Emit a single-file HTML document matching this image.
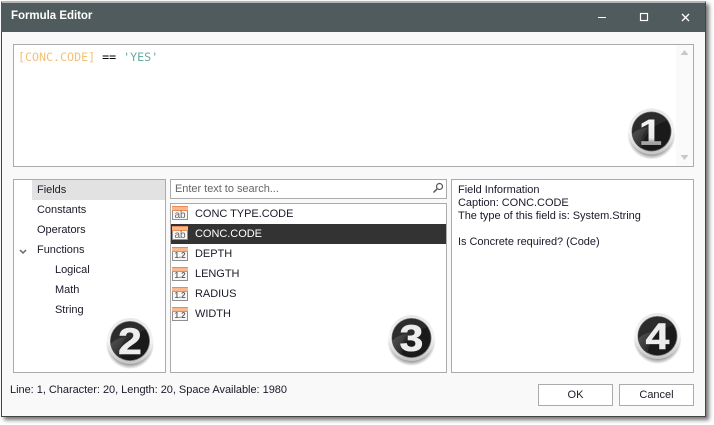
<!DOCTYPE html>
<html><head><meta charset="utf-8"><style>
html,body{margin:0;padding:0;background:#fff}
body{width:714px;height:425px;overflow:hidden;position:relative;font-family:"Liberation Sans",sans-serif;font-size:11px;color:#1a1a2a}
div{position:absolute;box-sizing:border-box}
.win{left:1px;top:1px;width:705px;height:416px;background:#f9f9f9;border:1px solid #444;border-top:2px solid #b5b5b5;box-shadow:3px 3px 4px rgba(0,0,0,.55)}
.title{left:1px;top:3px;width:704px;height:29px;background:#4f5b5c}
.box{background:#fff;border:1px solid #ababab}
.t{white-space:nowrap;line-height:13px;letter-spacing:-.03px}
.sel{background:#e2e2e2}
.ico{width:16px;height:14px;left:172px;background:#f7f7f7;border:1px solid #8f8f8f;border-top:none}
.ico:before{content:"";position:absolute;left:-1px;right:-1px;top:0;height:5px;background:#f9b98f;border-top:1px solid #ee8a55;border-bottom:1px solid #ee8a55;box-sizing:border-box}
.ico span{position:absolute;left:0;right:0;top:5px;text-align:center;font-size:8px;line-height:8px;color:#666;font-weight:bold}
.ico.ab span{font-size:10px;line-height:9px;top:5px;font-weight:normal}
.btn{background:#fff;border:1px solid #ababab;text-align:center;line-height:20px;top:384px;height:22px;width:75px}
</style></head><body>
<div class="win"></div>
<div class="title"></div>
<div class="t" style="left:11px;top:10px;color:#fff;font-weight:bold;font-size:11.5px">Formula Editor</div>
<svg style="position:absolute;left:590px;top:8px" width="110" height="20" fill="none" stroke="#fff">
<path d="M8 9.500h8" stroke-width="1"/><rect x="50.500" y="5.500" width="7" height="7" stroke-width="1.200"/><path d="M92 6l7 7M99 6l-7 7" stroke-width="1.300"/></svg>

<div class="box" style="left:13px;top:44px;width:681px;height:123px"></div>
<div style="left:676px;top:45px;width:17px;height:121px;background:#fafafa"></div>
<svg style="position:absolute;left:676px;top:45px" width="17" height="121" fill="#c8c8c8"><path d="M4.500 10l4-5 4 5z"/><path d="M4.500 110l4 5 4-5z"/></svg>
<div class="t" style="left:18px;top:51px;font-family:'DejaVu Sans Mono','Liberation Mono',monospace;font-size:11.65px;letter-spacing:0;color:#f3c078">[CONC.CODE] <span style="color:#000">==</span> <span style="color:#6aa9a0">'YES'</span></div>

<div class="box" style="left:13px;top:179px;width:153px;height:194px"></div>
<div class="sel" style="left:32px;top:180px;width:133px;height:20px"></div>
<div class="t" style="left:37px;top:184px">Fields</div>
<div class="t" style="left:37px;top:204px">Constants</div>
<div class="t" style="left:37px;top:224px">Operators</div>
<svg style="position:absolute;left:18px;top:248px" width="10" height="8" fill="none" stroke="#666"><path d="M2 2l3 3 3-3" stroke-width="1.500"/></svg>
<div class="t" style="left:37px;top:244px">Functions</div>
<div class="t" style="left:55px;top:264px">Logical</div>
<div class="t" style="left:55px;top:284px">Math</div>
<div class="t" style="left:55px;top:304px">String</div>

<div class="box" style="left:170px;top:179px;width:277px;height:20px"></div>
<div class="t" style="left:175px;top:183px;color:#666">Enter text to search...</div>
<svg style="position:absolute;left:431px;top:181px" width="14" height="14" fill="none" stroke="#555"><circle cx="8.500" cy="5.500" r="3" stroke-width="1.200"/><path d="M6 8l-3.500 3.500" stroke-width="1.500"/></svg>

<div class="box" style="left:170px;top:203px;width:277px;height:170px"></div>
<div style="left:171px;top:224px;width:275px;height:20px;background:#333"></div>
<div class="ico ab" style="top:206px"><span>ab</span></div>
<div class="ico ab" style="top:226px"><span>ab</span></div>
<div class="ico" style="top:247px"><span>1.2</span></div>
<div class="ico" style="top:267px"><span>1.2</span></div>
<div class="ico" style="top:287px"><span>1.2</span></div>
<div class="ico" style="top:307px"><span>1.2</span></div>
<div class="t" style="left:195px;top:208px">CONC TYPE.CODE</div>
<div class="t" style="left:195px;top:228px;color:#fff">CONC.CODE</div>
<div class="t" style="left:195px;top:248px">DEPTH</div>
<div class="t" style="left:195px;top:268px">LENGTH</div>
<div class="t" style="left:195px;top:288px">RADIUS</div>
<div class="t" style="left:195px;top:308px">WIDTH</div>

<div class="box" style="left:451px;top:179px;width:243px;height:194px"></div>
<div class="t" style="left:458px;top:184px">Field Information</div>
<div class="t" style="left:458px;top:197px">Caption: CONC.CODE</div>
<div class="t" style="left:458px;top:210px">The type of this field is: System.String</div>
<div class="t" style="left:458px;top:236px">Is Concrete required? (Code)</div>

<div class="t" style="left:10px;top:384px">Line: 1, Character: 20, Length: 20, Space Available: 1980</div>
<div class="btn" style="left:538px">OK</div>
<div class="btn" style="left:619px">Cancel</div>

<svg style="position:absolute;left:0;top:0" width="714" height="425">
<defs>
<linearGradient id="e" x1="0" y1="0" x2="0" y2="1"><stop offset="0" stop-color="#e8e8e8"/><stop offset=".5" stop-color="#f4f4f4"/><stop offset="1" stop-color="#c4c4c4"/></linearGradient>
<linearGradient id="d" x1="0" y1="0" x2="0" y2="1"><stop offset="0" stop-color="#f8f8f8"/><stop offset=".62" stop-color="#eaeaea"/><stop offset=".72" stop-color="#aaa"/><stop offset="1" stop-color="#777"/></linearGradient>
<linearGradient id="g" x1="0" y1="0" x2="1" y2="1"><stop offset="0" stop-color="#555"/><stop offset="1" stop-color="#222"/></linearGradient>
<radialGradient id="s"><stop offset=".72" stop-color="#000" stop-opacity=".55"/><stop offset="1" stop-color="#000" stop-opacity="0"/></radialGradient>
<g id="b"><ellipse cx="0" cy="4" rx="24" ry="24" fill="url(#s)"/><circle r="23" fill="url(#e)"/><circle r="20" fill="#777"/><circle r="19.200" fill="#1a1a1a"/><path d="M-17 -9A19.500 19.500 0 0 0 -10 17C-8 6 -2 -6 16 -11A19.500 19.500 0 0 0 -17 -9Z" fill="#2c2c2c"/><path d="M-19.200 3A19.500 19.500 0 0 0 -12 15C-11 8 -8 0 -3 -4C-10 -4 -16 -1 -19.200 3Z" fill="url(#g)"/></g>
</defs>
<use href="#b" x="651.500" y="131.500"/>
<use href="#b" x="130" y="341"/>
<use href="#b" x="411.500" y="338"/>
<use href="#b" x="657.500" y="336"/>
<g font-weight="bold" font-size="37" fill="#ededed" text-anchor="middle" stroke="#ededed" stroke-width=".6">
<text transform="translate(650.500 145) scale(1.150 1)" fill="url(#d)" stroke="none">1</text>
<text transform="translate(130 354) scale(1.150 1)">2</text>
<text transform="translate(411.500 351) scale(1.150 1)">3</text>
<text transform="translate(657.500 349) scale(1.150 1)">4</text>
</g>
</svg>
</body></html>
